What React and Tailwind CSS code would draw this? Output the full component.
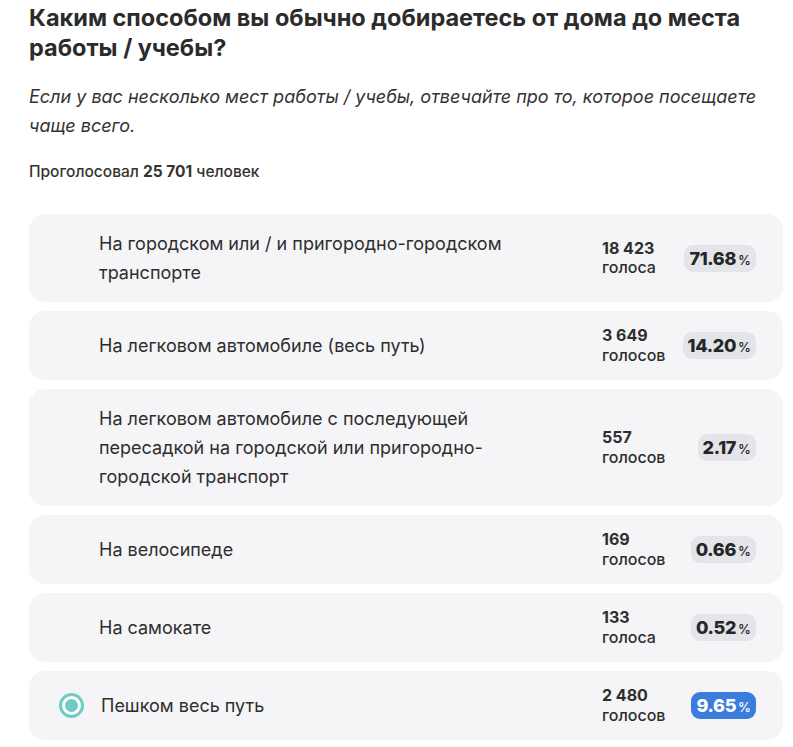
const options = [
  { text: 'На городском или / и пригородно-городском транспорте', count: '18 423', word: 'голоса', pct: '71.68' },
  { text: 'На легковом автомобиле (весь путь)', count: '3 649', word: 'голосов', pct: '14.20' },
  { text: 'На легковом автомобиле с последующей пересадкой на городской или пригородно-городской транспорт', count: '557', word: 'голосов', pct: '2.17' },
  { text: 'На велосипеде', count: '169', word: 'голосов', pct: '0.66' },
  { text: 'На самокате', count: '133', word: 'голоса', pct: '0.52' },
  { text: 'Пешком весь путь', count: '2 480', word: 'голосов', pct: '9.65', selected: true },
]

function Radio() {
  return (
    <div className="w-[25px] h-[25px] rounded-full border-[3px] border-[#6fcbc6] bg-white flex items-center justify-center">
      <div className="w-[13px] h-[13px] rounded-full bg-[#6fcbc6]" />
    </div>
  )
}

function Option({ o }) {
  return (
    <div className="flex items-center rounded-2xl bg-[#f5f5f7] py-[15px] pl-[30px] pr-[27px]">
      <div className="w-[25px] shrink-0 flex items-center">{o.selected && <Radio />}</div>
      <div className={'flex-1 ' + (o.selected ? 'pl-[17px]' : 'pl-[15px]')}>
        <div className="max-w-[430px] text-[18px] leading-[29px] text-[#2e2e2e]">{o.text}</div>
      </div>
      <div className="w-[84px] text-[16px] leading-[19.5px] text-[#2e2e2e]">
        <div className="font-bold">{o.count}</div>
        <div className="font-medium">{o.word}</div>
      </div>
      <div className="w-[70px] flex justify-end">
        <div
          className={
            'flex items-baseline gap-[2px] rounded-[9px] px-[5px] h-[27px] leading-[27px] ' +
            (o.selected ? 'bg-[#3a7ddc] text-white' : 'bg-[#e3e5ea] text-[#262626]')
          }
        >
          <span className="text-[18px] font-extrabold tracking-[-0.3px]">{o.pct}</span>
          <span className="text-[13px] font-medium">%</span>
        </div>
      </div>
    </div>
  )
}

export default function App() {
  return (
    <div className="bg-white min-h-screen pl-[29px] pr-[10px] pt-[3px] text-[#2b2b2b]" style={{ fontFamily: 'Inter, "Noto Sans", sans-serif' }}>
      <h1 className="text-[23.5px] leading-[30px] font-bold pr-[20px]">
        Каким способом вы обычно добираетесь от дома до места работы / учебы?
      </h1>
      <p className="mt-[19px] pr-[20px] text-[18px] leading-[29px] italic text-[#333]">
        Если у вас несколько мест работы / учебы, отвечайте про то, которое посещаете чаще всего.
      </p>
      <p className="mt-[22px] text-[15.5px] leading-[20px] font-medium text-[#333]">
        Проголосовал <span className="font-bold">25 701</span> человек
      </p>
      <div className="mt-[32px] flex flex-col gap-[9px]">
        {options.map(o => (
          <Option key={o.text} o={o} />
        ))}
      </div>
    </div>
  )
}
